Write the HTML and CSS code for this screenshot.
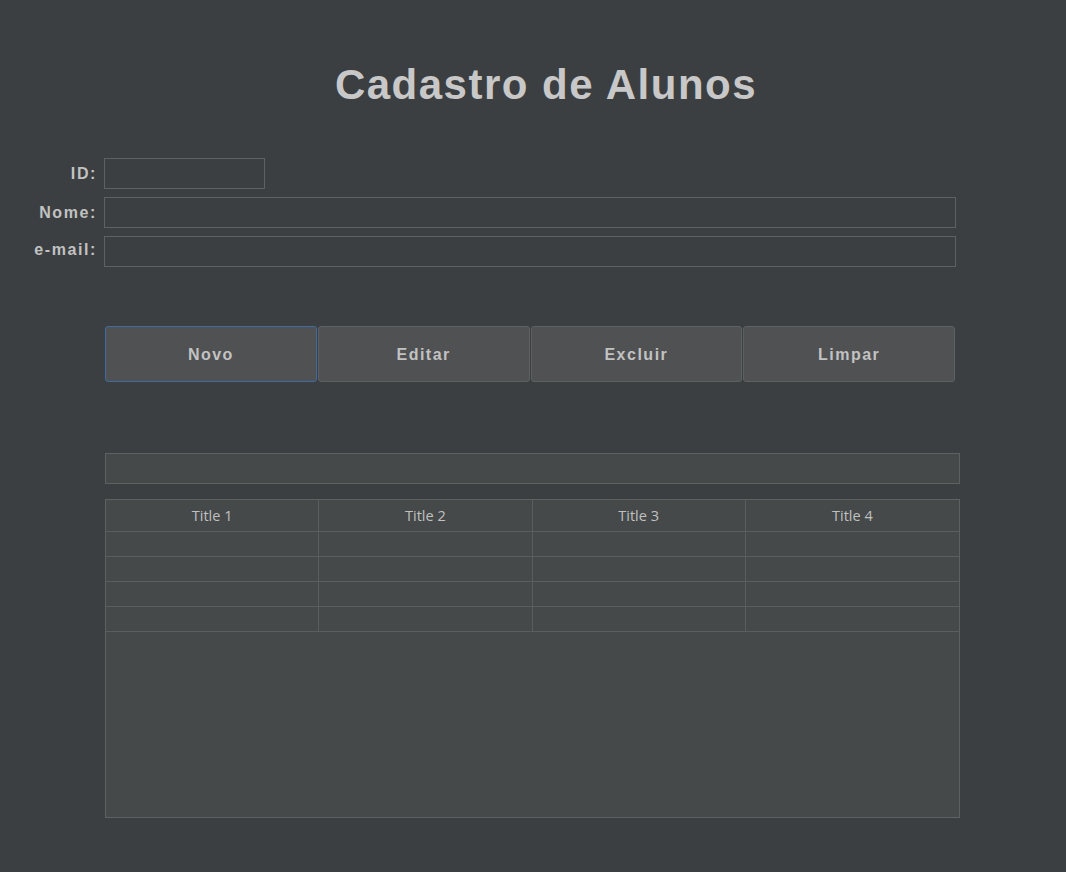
FILE: index.html
```html
<!DOCTYPE html>
<html lang="pt">
<head>
<meta charset="utf-8">
<title>Cadastro de Alunos</title>
<link rel="stylesheet" href="styles.css">
</head>
<body>
<main class="window">
  <h1 class="title">Cadastro de Alunos</h1>

  <form class="form">
    <div class="row">
      <label class="label" for="id">ID:</label>
      <input class="field field-id" id="id" type="text">
    </div>
    <div class="row">
      <label class="label" for="nome">Nome:</label>
      <input class="field field-wide" id="nome" type="text">
    </div>
    <div class="row">
      <label class="label label-low" for="email">e-mail:</label>
      <input class="field field-wide" id="email" type="text">
    </div>
  </form>

  <div class="buttons">
    <button class="btn btn-focus" type="button">Novo</button>
    <button class="btn" type="button">Editar</button>
    <button class="btn" type="button">Excluir</button>
    <button class="btn" type="button">Limpar</button>
  </div>

  <input class="search" type="text">

  <div class="table-wrap">
    <table class="grid">
      <thead>
        <tr><th>Title 1</th><th>Title 2</th><th>Title 3</th><th>Title 4</th></tr>
      </thead>
      <tbody>
        <tr><td></td><td></td><td></td><td></td></tr>
        <tr><td></td><td></td><td></td><td></td></tr>
        <tr><td></td><td></td><td></td><td></td></tr>
        <tr><td></td><td></td><td></td><td></td></tr>
      </tbody>
    </table>
  </div>
</main>
</body>
</html>
```

FILE: styles.css
```css
* { box-sizing: border-box; }

html, body {
  margin: 0;
  padding: 0;
  background: #3c3f41;
  height: 100%;
}

body {
  font-family: "Liberation Sans", Arial, sans-serif;
  color: #bbbbbb;
}

.window {
  width: 1066px;
  height: 872px;
  display: flex;
  flex-direction: column;
}

.title {
  margin: 60px 0 0 0;
  padding-left: 26px;
  height: 50px;
  line-height: 50px;
  font-size: 42px;
  font-weight: bold;
  letter-spacing: 1.5px;
  text-align: center;
  color: #c8c8c8;
}

.form {
  margin-top: 48px;
  display: flex;
  flex-direction: column;
  gap: 8px;
}

.row {
  display: flex;
  align-items: center;
  gap: 7px;
}

.label {
  width: 97px;
  text-align: right;
  font-size: 16px;
  font-weight: bold;
  letter-spacing: 1.6px;
  color: #c2c2c2;
}

.label-low {
  margin-bottom: 4px;
}

.field {
  height: 31px;
  margin: 0;
  border: 1px solid #5e6162;
  background: #3c3f41;
  color: #bbbbbb;
  outline: none;
  padding: 0 6px;
  font-family: "Liberation Sans", Arial, sans-serif;
  font-size: 14px;
}

.field-id { width: 161px; }
.field-wide { width: 852px; }

.buttons {
  margin: 59px 0 0 105px;
  width: 850px;
  height: 56px;
  display: flex;
  gap: 1px;
}

.btn {
  flex: 1;
  margin: 0;
  padding: 2px 0 0 0;
  border: 1px solid #5e6162;
  border-radius: 3px;
  background: #4f5153;
  color: #c2c2c2;
  font-family: "Liberation Sans", Arial, sans-serif;
  font-size: 16px;
  font-weight: bold;
  letter-spacing: 1.5px;
}

.btn-focus {
  border-color: #3f6aa2;
}

.search {
  margin: 71px 0 0 105px;
  width: 855px;
  height: 31px;
  border: 1px solid #5e6162;
  background: #45494a;
  outline: none;
  padding: 0 6px;
}

.table-wrap {
  margin: 15px 0 0 105px;
  width: 855px;
  height: 319px;
  border: 1px solid #5e6162;
  background: #45494a;
}

.grid {
  width: 100%;
  table-layout: fixed;
  border-collapse: separate;
  border-spacing: 0;
}

.grid th,
.grid td {
  padding: 0;
  border-right: 1px solid #5b5e60;
  border-bottom: 1px solid #5b5e60;
}

.grid th:last-child,
.grid td:last-child {
  border-right: none;
}

.grid th {
  height: 32px;
  font-family: "Open Sans", "Noto Sans", sans-serif;
  font-size: 14.5px;
  font-weight: normal;
  color: #c0c0c0;
  text-align: center;
  vertical-align: middle;
}

.grid td {
  height: 25px;
}
```
